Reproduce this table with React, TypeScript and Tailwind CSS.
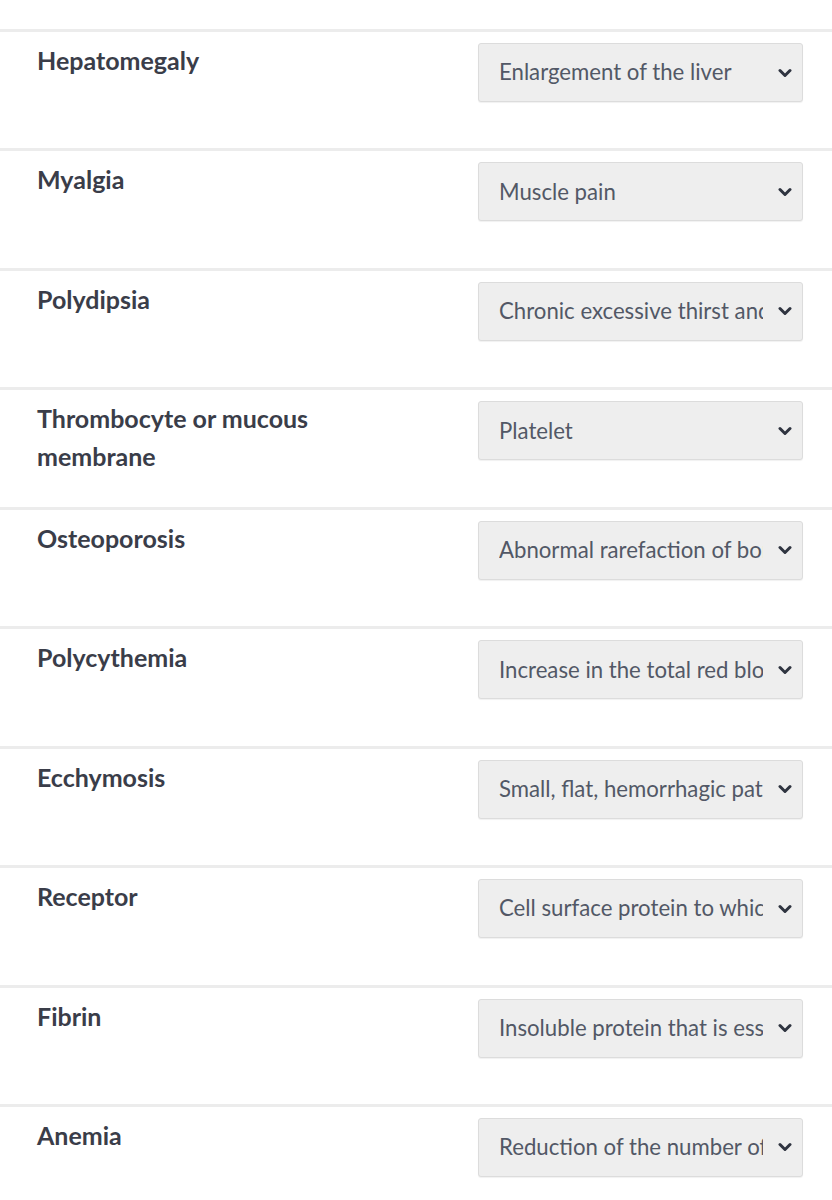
import React from "react";

const rows: { term: string; answer: string }[] = [
  { term: "Hepatomegaly", answer: "Enlargement of the liver" },
  { term: "Myalgia", answer: "Muscle pain" },
  { term: "Polydipsia", answer: "Chronic excessive thirst and intake of fluid" },
  { term: "Thrombocyte or mucous membrane", answer: "Platelet" },
  { term: "Osteoporosis", answer: "Abnormal rarefaction of bone" },
  { term: "Polycythemia", answer: "Increase in the total red blood cell mass" },
  { term: "Ecchymosis", answer: "Small, flat, hemorrhagic patch" },
  { term: "Receptor", answer: "Cell surface protein to which a ligand binds" },
  { term: "Fibrin", answer: "Insoluble protein that is essential to clotting" },
  { term: "Anemia", answer: "Reduction of the number of red blood cells" },
];

function Chevron() {
  return (
    <svg width="14" height="10" viewBox="0 0 14 10" className="shrink-0">
      <path d="M2 2.5 L7 7.5 L12 2.5" fill="none" stroke="#2f3440" strokeWidth="3" strokeLinecap="round" strokeLinejoin="round" />
    </svg>
  );
}

export default function App() {
  return (
    <div className="bg-white w-[832px] h-[1200px] overflow-hidden pt-[29px]" style={{ fontFamily: "Lato, 'Open Sans', sans-serif" }}>
      {rows.map((r) => (
        <div key={r.term} className="h-[119.44px] border-t-[3px] border-[#ececec] flex items-start pl-[37px] pt-[11px]">
          <div className="w-[300px] -mt-[2px] text-[25px] leading-[38px] font-bold text-[#3a3d49]">{r.term}</div>
          <div className="ml-[141px] w-[325px] h-[59px] bg-[#eeeeee] border border-[#dcdcdc] rounded-[3px] shadow-[0_1px_1px_rgba(0,0,0,0.06)] flex items-center pl-[20px] pr-[10px]">
            <div className="w-[264px] -mt-[1px] overflow-hidden whitespace-nowrap text-[22.2px] text-[#525866]">{r.answer}</div>
            <div className="ml-auto"><Chevron /></div>
          </div>
        </div>
      ))}
    </div>
  );
}
